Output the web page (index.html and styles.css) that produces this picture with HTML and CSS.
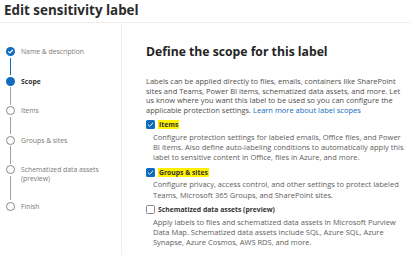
FILE: index.html
```html
<!DOCTYPE html>
<html lang="en">
<head>
    <meta charset="UTF-8">
    <meta name="viewport" content="width=device-width, initial-scale=1.0">
    <title>Edit sensitivity label</title>
    <link rel="stylesheet" href="styles.css">
</head>
<body>
    <header class="page-header">
        <h1>Edit sensitivity label</h1>
    </header>

    <div class="wizard">
        <ol class="steps">
            <li class="step done">
                <div class="track">
                    <span class="dot">
                        <svg viewBox="0 0 10 10" width="9" height="9"><path d="M2.8 5.2 L4.3 6.6 L7.2 3.6" fill="none" stroke="#fff" stroke-width="1.3" stroke-linecap="round" stroke-linejoin="round"/></svg>
                    </span>
                    <span class="line"></span>
                </div>
                <div class="label">Name &amp; description</div>
            </li>
            <li class="step current">
                <div class="track"><span class="dot"></span><span class="line"></span></div>
                <div class="label">Scope</div>
            </li>
            <li class="step">
                <div class="track"><span class="dot"></span><span class="line"></span></div>
                <div class="label">Items</div>
            </li>
            <li class="step">
                <div class="track"><span class="dot"></span><span class="line"></span></div>
                <div class="label">Groups &amp; sites</div>
            </li>
            <li class="step">
                <div class="track"><span class="dot"></span><span class="line"></span></div>
                <div class="label">Schematized data assets (preview)</div>
            </li>
            <li class="step last">
                <div class="track"><span class="dot"></span></div>
                <div class="label">Finish</div>
            </li>
        </ol>

        <main class="content">
            <h2>Define the scope for this label</h2>
            <p class="intro">Labels can be applied directly to files, emails, containers like SharePoint sites and Teams, Power BI items, schematized data assets, and more. Let us know where you want this label to be used so you can configure the applicable protection settings. <a href="#">Learn more about label scopes</a></p>

            <div class="option">
                <label class="check"><span class="box checked"><svg viewBox="0 0 10 10" width="9" height="9"><path d="M2.4 5.3 L4.2 7 L7.6 3.4" fill="none" stroke="#fff" stroke-width="1" stroke-linecap="round" stroke-linejoin="round"/></svg></span><span class="mark">Items</span></label>
                <p class="desc">Configure protection settings for labeled emails, Office files, and Power BI items. Also define auto-labeling conditions to automatically apply this label to sensitive content in Office, files in Azure, and more.</p>
            </div>

            <div class="option">
                <label class="check"><span class="box checked"><svg viewBox="0 0 10 10" width="9" height="9"><path d="M2.4 5.3 L4.2 7 L7.6 3.4" fill="none" stroke="#fff" stroke-width="1" stroke-linecap="round" stroke-linejoin="round"/></svg></span><span class="mark">Groups &amp; sites</span></label>
                <p class="desc">Configure privacy, access control, and other settings to protect labeled Teams, Microsoft 365 Groups, and SharePoint sites.</p>
            </div>

            <div class="option">
                <label class="check"><span class="box"></span><span class="name">Schematized data assets (preview)</span></label>
                <p class="desc">Apply labels to files and schematized data assets in Microsoft Purview Data Map. Schematized data assets include SQL, Azure SQL, Azure Synapse, Azure Cosmos, AWS RDS, and more.</p>
            </div>
        </main>
    </div>
</body>
</html>
```

FILE: styles.css
```css
body {
    margin: 0;
    padding: 0;
    background-color: #ffffff;
    font-family: "Open Sans", "Noto Sans", sans-serif;
    color: #323130;
}
.page-header {
    height: 23px;
    border-bottom: 1px solid #f0efee;
    box-sizing: border-box;
}
h1 {
    margin: 0;
    padding: 2px 0 0 4px;
    font-size: 13.4px;
    line-height: 17px;
    font-weight: 700;
    color: #2b2b2b;
}
.wizard {
    display: flex;
    height: 232px;
}
.steps {
    list-style: none;
    margin: 0;
    padding: 24px 0 0 6px;
    width: 115px;
    border-right: 1px solid #f0efee;
}
.step {
    display: flex;
    gap: 6px;
    min-height: 29.5px;
}
.track {
    display: flex;
    flex-direction: column;
    align-items: center;
    width: 9px;
    flex-shrink: 0;
}
.dot {
    display: flex;
    align-items: center;
    justify-content: center;
    width: 9px;
    height: 9px;
    box-sizing: border-box;
    border-radius: 50%;
    border: 1.2px solid #8a8886;
    background-color: #fff;
}
.line {
    flex: 1;
    width: 1px;
    margin: 1.5px 0;
    background-color: #a19f9d;
}
.step.done .dot,
.step.current .dot {
    border: none;
    background-color: #0f6cbd;
}
.step.done .line {
    background-color: #0f6cbd;
    width: 1.5px;
}
.label {
    font-size: 6.8px;
    line-height: 9.4px;
    color: #7a7876;
    width: 80px;
    padding-bottom: 18px;
}
.step.current .label {
    font-weight: 700;
    color: #323130;
}
.content {
    flex: 1;
    padding: 20.5px 3px 0 24px;
}
h2 {
    margin: 0;
    font-size: 12.2px;
    line-height: 15px;
    font-weight: 700;
    color: #242424;
}
.intro {
    margin: 18.5px 0 0;
    font-size: 7.5px;
    line-height: 9.5px;
    color: #4f4d4b;
}
.intro a {
    color: #0f6cbd;
    text-decoration: none;
}
.option {
    margin-top: 4.2px;
}
.check {
    display: flex;
    align-items: center;
    gap: 3px;
    height: 11px;
    font-size: 6.8px;
    font-weight: 700;
    color: #323130;
}
.box {
    display: flex;
    align-items: center;
    justify-content: center;
    width: 9px;
    height: 9px;
    box-sizing: border-box;
    border: 1px solid #8a8886;
    border-radius: 1.5px;
}
.box.checked {
    border: none;
    background-color: #0f6cbd;
}
.mark {
    background-color: #fff200;
    padding: 0 1px;
    line-height: 9px;
}
.desc {
    margin: 1.6px 0 0 7px;
    font-size: 7.5px;
    line-height: 10.3px;
    color: #605e5c;
}
```
